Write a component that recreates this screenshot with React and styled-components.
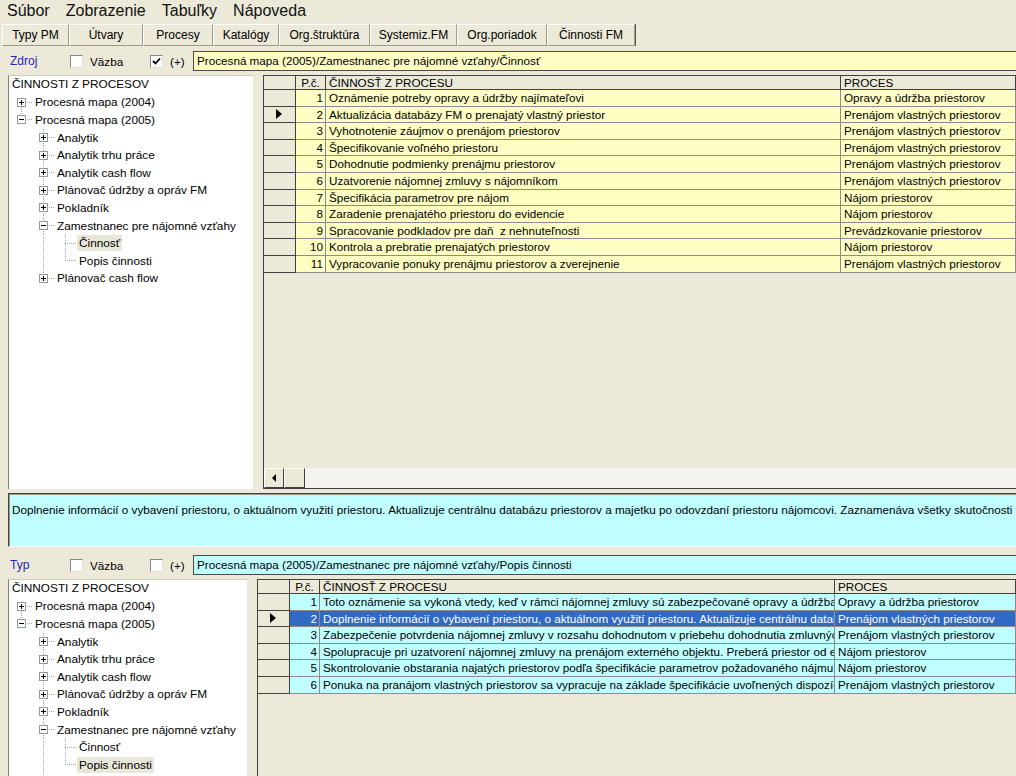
import styled, { createGlobalStyle, css } from 'styled-components';

const GlobalStyle = createGlobalStyle`
  html, body {
    margin: 0;
    padding: 0;
    background: #ece9d8;
  }
  body {
    font-family: 'Liberation Sans', Arial, sans-serif;
  }
`

const Window = styled.div`
    width: 1016px;
    height: 776px;
    overflow: hidden;
    display: flex;
    flex-direction: column;
    background: #ece9d8;
    color: #000;
    font-size: 11.7px;
`

const MenuBar = styled.div`
    height: 22px;
    flex: none;
    display: flex;
    align-items: center;
    gap: 16px;
    padding-left: 7px;
    font-size: 16px;
    color: #111;
`

const Toolbar = styled.div`
    height: 22px;
    flex: none;
    margin-top: 2px;
    padding-left: 2px;
    display: flex;
`

const ToolButton = styled.div`
    width: ${p => p.$w}px;
    height: 22px;
    box-sizing: border-box;
    display: flex;
    align-items: center;
    justify-content: center;
    border-top: 1px solid #fff;
    border-left: 1px solid #fff;
    border-right: 1px solid #9d9a8c;
    border-bottom: 1px solid #9d9a8c;
    box-shadow: 1px 0 0 #5c5a52;
    font-size: 12px;
`

const FilterRow = styled.div`
    height: 20px;
    flex: none;
    margin-top: ${p => p.$top}px;
    padding-left: 10px;
    display: flex;
    align-items: center;
`

const SourceLabel = styled.div`
    width: 60px;
    color: #2626b8;
    font-size: 12px;
`

const CheckGroup = styled.div`
    width: ${p => p.$w}px;
    display: flex;
    align-items: center;
    gap: 7px;
`

const CheckBox = styled.div`
    width: 13px;
    height: 13px;
    box-sizing: border-box;
    background: #fff;
    border-top: 1px solid #8a8878;
    border-left: 1px solid #8a8878;
    border-right: 1px solid #e4e2d6;
    border-bottom: 1px solid #e4e2d6;
    display: flex;
    align-items: center;
    justify-content: center;
`

const PathBox = styled.div`
    flex: 1;
    height: 20px;
    box-sizing: border-box;
    background: ${p => p.$bg};
    border: 1px solid #4a4a4a;
    border-right: none;
    padding-left: 3px;
    line-height: 18px;
    white-space: nowrap;
    overflow: hidden;
`

const Panel = styled.div`
    flex: ${p => (p.$fill ? '1' : 'none')};
    height: ${p => (p.$fill ? 'auto' : `${p.$h}px`)};
    min-height: 0;
    margin-top: 4px;
    padding-left: 8px;
    display: flex;
    gap: 10px;
`

const Tree = styled.div`
    width: ${p => p.$w}px;
    flex: none;
    box-sizing: border-box;
    background: #fff;
    border-left: 1px solid #7f7f7f;
    border-top: 1px solid #d0cdc0;
    padding-left: 1px;
    overflow: hidden;
    font-size: 11.8px;
`

const TreeTitle = styled.div`
    height: 17.6px;
    line-height: 17.6px;
    padding-left: 2px;
    white-space: nowrap;
`

const TreeRow = styled.div`
    height: 17.6px;
    display: flex;
    align-items: stretch;
    white-space: nowrap;
`

const dotsV = 'repeating-linear-gradient(to bottom, #a5a5a5 0 1px, transparent 1px 2px)';
const dotsH = 'repeating-linear-gradient(to right, #a5a5a5 0 1px, transparent 1px 2px)';

const Guide = styled.span`
    width: 22px;
    flex: none;
    ${p => p.$line && css`
        background: ${dotsV} 11px 0 / 1px 100% no-repeat;
    `}
`

const Joint = styled.span`
    width: 22px;
    flex: none;
    display: flex;
    align-items: center;
    justify-content: center;
    background:
        ${dotsH} 11px 50% / 11px 1px no-repeat,
        ${dotsV} 11px 0 / 1px ${p => (p.$kind === 'mid' ? '100%' : '50%')} no-repeat;
    ${p => p.$kind === 'first' && css`
        background:
            ${dotsH} 11px 50% / 11px 1px no-repeat,
            ${dotsV} 11px 100% / 1px 50% no-repeat;
    `}
`

const ExpandBox = styled.span`
    width: 9px;
    height: 9px;
    box-sizing: border-box;
    margin-left: 1px;
    border: 1px solid #8f9ca3;
    background:
        linear-gradient(#000, #000) 50% 50% / 5px 1px no-repeat,
        ${p => (p.$open ? '' : 'linear-gradient(#000, #000) 50% 50% / 1px 5px no-repeat,')}
        #fff;
`

const NodeText = styled.span`
    margin-left: 1px;
    padding: 0 2px;
    line-height: 16px;
    height: 16px;
    align-self: center;
    background: ${p => (p.$selected ? '#e9e6da' : 'transparent')};
`

const Grid = styled.div`
    flex: 1;
    min-width: 0;
    display: flex;
    flex-direction: column;
    border-left: 1px solid #404040;
    border-top: 1px solid #404040;
    border-bottom: ${p => (p.$bottomLine ? '1px solid #404040' : 'none')};
    overflow: hidden;
`

const GridRow = styled.div`
    display: grid;
    grid-template-columns: 32px 30px 515px 1fr;
    height: ${p => (p.$header ? '14px' : '16.6px')};
    flex: none;
    background: ${p => p.$bg || '#ece9d8'};
    color: ${p => p.$fg || '#000'};
`

const IndicatorCell = styled.div`
    box-sizing: border-box;
    background: #ece9d8;
    border-right: 1px solid #404040;
    border-bottom: 1px solid #404040;
    display: flex;
    align-items: center;
    justify-content: center;
`

const Arrow = styled.span`
    width: 0;
    height: 0;
    border-top: 5px solid transparent;
    border-bottom: 5px solid transparent;
    border-left: 6px solid #000;
    margin-right: 2px;
`

const HeadCell = styled.div`
    box-sizing: border-box;
    border-right: 1px solid #404040;
    border-bottom: 1px solid #404040;
    padding: 0 3px;
    line-height: 13px;
    white-space: nowrap;
    overflow: hidden;
    text-align: ${p => (p.$center ? 'center' : 'left')};
`

const Cell = styled.div`
    box-sizing: border-box;
    border-right: 1px solid #8c8c8c;
    border-bottom: 1px solid #8c8c8c;
    padding: 0 ${p => (p.$num ? '2px' : '3px')};
    line-height: 15.6px;
    white-space: pre;
    overflow: hidden;
    text-align: ${p => (p.$num ? 'right' : 'left')};
`

const GridSpace = styled.div`
    flex: 1;
`

const HScroll = styled.div`
    height: 20px;
    flex: none;
    display: flex;
    background: #f4f3ee;
`

const ScrollButton = styled.div`
    width: 20px;
    height: 20px;
    box-sizing: border-box;
    background: #ece9d8;
    border-top: 1px solid #fff;
    border-left: 1px solid #fff;
    border-right: 1px solid #404040;
    border-bottom: 1px solid #404040;
    display: flex;
    align-items: center;
    justify-content: center;
`

const ScrollThumb = styled(ScrollButton)`
    width: 21px;
`

const LeftArrow = styled.span`
    width: 0;
    height: 0;
    border-top: 4px solid transparent;
    border-bottom: 4px solid transparent;
    border-right: 4px solid #000;
`

const DescBox = styled.div`
    height: 54px;
    flex: none;
    margin-top: 4px;
    margin-left: 8px;
    box-sizing: border-box;
    background: #c0ffff;
    border-top: 1px solid #404040;
    border-left: 1px solid #404040;
    border-bottom: 1px solid #fff;
    box-shadow: inset 1px 1px 0 #9d9a8c;
    padding: 9px 0 0 3px;
    white-space: nowrap;
    overflow: hidden;
`

const menuItems = ['Súbor', 'Zobrazenie', 'Tabuľky', 'Nápoveda'];

const toolButtons = [
    ['Typy PM', 67],
    ['Útvary', 74],
    ['Procesy', 70],
    ['Katalógy', 66],
    ['Org.štruktúra', 91],
    ['Systemiz.FM', 87],
    ['Org.poriadok', 90],
    ['Činnosti FM', 88],
];

const topRows = [
    [1, 'Oznámenie potreby opravy a údržby najímateľovi', 'Opravy a údržba priestorov'],
    [2, 'Aktualizácia databázy FM o prenajatý vlastný priestor', 'Prenájom vlastných priestorov'],
    [3, 'Vyhotnotenie záujmov o prenájom priestorov', 'Prenájom vlastných priestorov'],
    [4, 'Špecifikovanie voľného priestoru', 'Prenájom vlastných priestorov'],
    [5, 'Dohodnutie podmienky prenájmu priestorov', 'Prenájom vlastných priestorov'],
    [6, 'Uzatvorenie nájomnej zmluvy s nájomníkom', 'Prenájom vlastných priestorov'],
    [7, 'Špecifikácia parametrov pre nájom', 'Nájom priestorov'],
    [8, 'Zaradenie prenajatého priestoru do evidencie', 'Nájom priestorov'],
    [9, 'Spracovanie podkladov pre daň  z nehnuteľnosti', 'Prevádzkovanie priestorov'],
    [10, 'Kontrola a prebratie prenajatých priestorov', 'Nájom priestorov'],
    [11, 'Vypracovanie ponuky prenájmu priestorov a zverejnenie', 'Prenájom vlastných priestorov'],
];

const bottomRows = [
    [1, 'Toto oznámenie sa vykoná vtedy, keď v rámci nájomnej zmluvy sú zabezpečované opravy a údržba priestorov', 'Opravy a údržba priestorov'],
    [2, 'Doplnenie informácií o vybavení priestoru, o aktuálnom využití priestoru. Aktualizuje centrálnu databázu priestorov', 'Prenájom vlastných priestorov'],
    [3, 'Zabezpečenie potvrdenia nájomnej zmluvy v rozsahu dohodnutom v priebehu dohodnutia zmluvných podmienok', 'Prenájom vlastných priestorov'],
    [4, 'Spolupracuje pri uzatvorení nájomnej zmluvy na prenájom externého objektu. Preberá priestor od externého', 'Nájom priestorov'],
    [5, 'Skontrolovanie obstarania najatých priestorov podľa špecifikácie parametrov požadovaného nájmu', 'Nájom priestorov'],
    [6, 'Ponuka na pranájom vlastných priestorov sa vypracuje na základe špecifikácie uvoľnených dispozícií', 'Prenájom vlastných priestorov'],
];

const treeItems = [
    { guides: [], joint: 'first', box: 'plus', label: 'Procesná mapa (2004)' },
    { guides: [], joint: 'last', box: 'minus', label: 'Procesná mapa (2005)' },
    { guides: [false], joint: 'mid', box: 'plus', label: 'Analytik' },
    { guides: [false], joint: 'mid', box: 'plus', label: 'Analytik trhu práce' },
    { guides: [false], joint: 'mid', box: 'plus', label: 'Analytik cash flow' },
    { guides: [false], joint: 'mid', box: 'plus', label: 'Plánovač údržby a opráv FM' },
    { guides: [false], joint: 'mid', box: 'plus', label: 'Pokladník' },
    { guides: [false], joint: 'mid', box: 'minus', label: 'Zamestnanec pre nájomné vzťahy' },
    { guides: [false, true], joint: 'mid', label: 'Činnosť' },
    { guides: [false, true], joint: 'last', label: 'Popis činnosti' },
    { guides: [false], joint: 'last', box: 'plus', label: 'Plánovač cash flow' },
];

const Check = ({ checked }) => (
    <CheckBox>
        {checked && (
            <svg width="9" height="9" viewBox="0 0 9 9">
                <path d="M1 4 L3.5 6.5 L8 1.5" fill="none" stroke="#000" strokeWidth="1.8" />
            </svg>
        )}
    </CheckBox>
)

const Filter = ({ label, plusChecked, path, bg, top }) => (
    <FilterRow $top={top}>
        <SourceLabel>{label}</SourceLabel>
        <CheckGroup $w={80}>
            <Check />
            <span>Väzba</span>
        </CheckGroup>
        <CheckGroup $w={43}>
            <Check checked={plusChecked} />
            <span>(+)</span>
        </CheckGroup>
        <PathBox $bg={bg}>{path}</PathBox>
    </FilterRow>
)

const TreeView = ({ width, selected }) => (
    <Tree $w={width}>
        <TreeTitle>ČINNOSTI Z PROCESOV</TreeTitle>
        {treeItems.map((item, i) => (
            <TreeRow key={i}>
                {item.guides.map((g, j) => <Guide key={j} $line={g} />)}
                <Joint $kind={item.joint}>
                    {item.box && <ExpandBox $open={item.box === 'minus'} />}
                </Joint>
                <NodeText $selected={item.label === selected}>{item.label}</NodeText>
            </TreeRow>
        ))}
    </Tree>
)

const DataGrid = ({ rows, current, bg, highlight, scroll }) => (
    <Grid $bottomLine={scroll}>
        <GridRow $header>
            <IndicatorCell />
            <HeadCell $center>P.č.</HeadCell>
            <HeadCell>ČINNOSŤ Z PROCESU</HeadCell>
            <HeadCell>PROCES</HeadCell>
        </GridRow>
        {rows.map(([n, text, proc]) => {
            const sel = highlight && n === current;
            return (
                <GridRow key={n} $bg={sel ? '#316ac5' : bg} $fg={sel ? '#fff' : '#000'}>
                    <IndicatorCell>{n === current && <Arrow />}</IndicatorCell>
                    <Cell $num>{n}</Cell>
                    <Cell>{text}</Cell>
                    <Cell>{proc}</Cell>
                </GridRow>
            );
        })}
        <GridSpace />
        {scroll && (
            <HScroll>
                <ScrollButton><LeftArrow /></ScrollButton>
                <ScrollThumb />
            </HScroll>
        )}
    </Grid>
)

const App = () => {
    return (
        <Window>
            <GlobalStyle />
            <MenuBar>
                {menuItems.map(m => <span key={m}>{m}</span>)}
            </MenuBar>
            <Toolbar>
                {toolButtons.map(([t, w]) => <ToolButton key={t} $w={w}>{t}</ToolButton>)}
            </Toolbar>
            <Filter
                top={5}
                label="Zdroj"
                plusChecked
                bg="#ffffc4"
                path="Procesná mapa (2005)/Zamestnanec pre nájomné vzťahy/Činnosť"
            />
            <Panel $h={414}>
                <TreeView width={245} selected="Činnosť" />
                <DataGrid rows={topRows} current={2} bg="#ffffc4" scroll />
            </Panel>
            <DescBox>
                Doplnenie informácií o vybavení priestoru, o aktuálnom využití priestoru. Aktualizuje centrálnu databázu priestorov a majetku po odovzdaní priestoru nájomcovi. Zaznamenáva všetky skutočnosti týkajúce sa prenájmu.
            </DescBox>
            <Filter
                top={8}
                label="Typ"
                bg="#c0ffff"
                path="Procesná mapa (2005)/Zamestnanec pre nájomné vzťahy/Popis činnosti"
            />
            <Panel $fill>
                <TreeView width={239} selected="Popis činnosti" />
                <DataGrid rows={bottomRows} current={2} bg="#c0ffff" highlight />
            </Panel>
        </Window>
    )
}

export default App;
